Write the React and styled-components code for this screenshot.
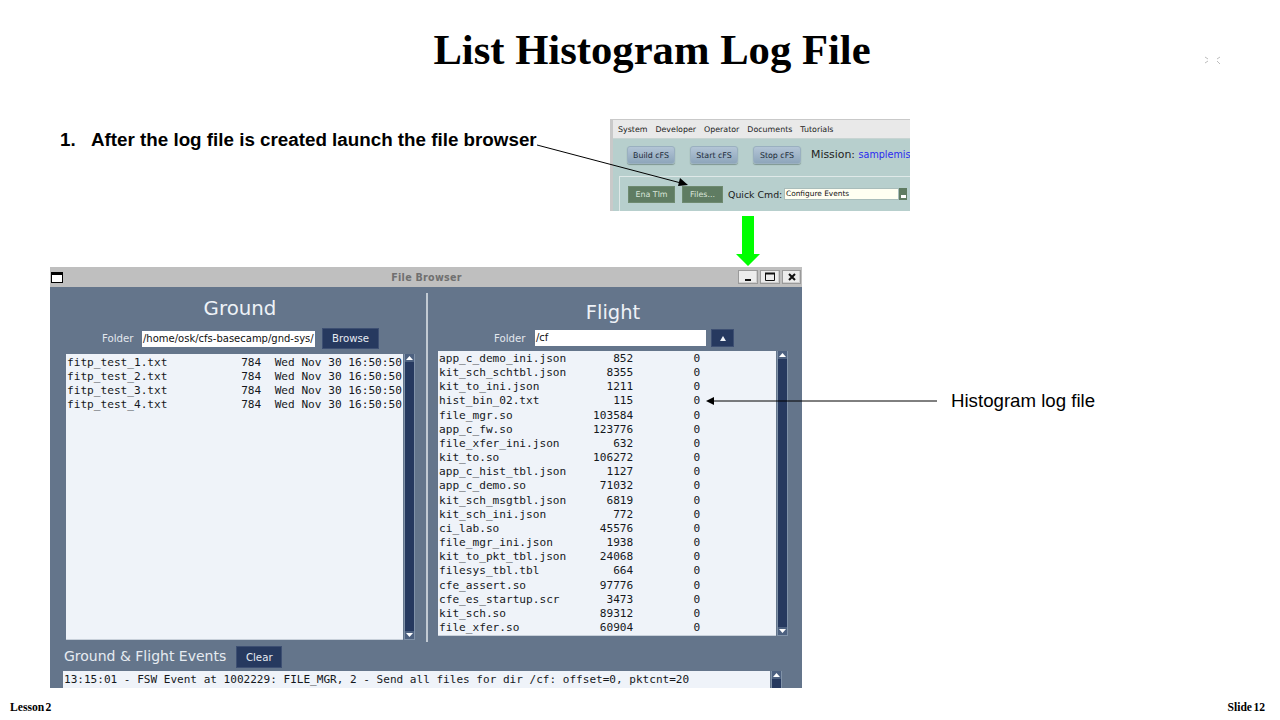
import React from "react";
import styled, { createGlobalStyle } from "styled-components";

const Global = createGlobalStyle`
  html, body { margin: 0; padding: 0; background: #fff; }
  * { box-sizing: border-box; }
`;
const Slide = styled.div`
  position: relative; width: 1280px; height: 720px; overflow: hidden; background: #fff;
  display: flex; flex-direction: column; font-family: "Liberation Sans", Arial, sans-serif; color: #000;
`;
const Title = styled.h1`
  margin: 0; height: 100px; padding-left: 24px; display: flex; align-items: center; justify-content: center;
  font: bold 42.67px/1 "Liberation Serif", "Times New Roman", serif;
`;
const TopRow = styled.div`
  display: flex; align-items: flex-start; height: 112px; padding: 19px 0 0 60px;
`;
const Step = styled.div`
  display: flex; width: 550px; padding-top: 10px; font-weight: bold; font-size: 18.8px; line-height: 21px; white-space: nowrap;
`;
const StepNum = styled.span` width: 31px; `;
const Shot = styled.div`
  width: 300px; height: 92px; overflow: hidden; background: #b7cfcd; font-family: "DejaVu Sans", sans-serif;
  border-left: 3px solid #c9c9c9; border-top: 1px solid #c9c9c9;
`;
const MenuBar = styled.div`
  height: 19px; background: #e9e9e9; display: flex; align-items: center; gap: 8px; padding-left: 5px;
  font-size: 7.9px; color: #222; border-bottom: 1px solid #c8d4d2;
`;
const ShotRow = styled.div`
  height: 37px; display: flex; align-items: flex-start; padding: 7px 0 0 14px; white-space: nowrap;
`;
const CfsButton = styled.div`
  width: 48px; height: 18px; flex: none; margin-right: 15px; border-radius: 3px; background: linear-gradient(#b3c5d6, #8ea6bb);
  border: 1px solid #9ab0c0; color: #1c2a38; font-size: 7.9px; display: flex; align-items: center; justify-content: center;
  box-shadow: 0 1px 1px #7f9693;
`;
const Mission = styled.span` font-size: 10.9px; line-height: 18px; color: #222; margin-left: -5px; `;
const MissionName = styled.span` font-size: 9.6px; color: #2a2af0; `;
const CmdPanel = styled.div`
  margin-left: 6px; height: 36px; border-top: 1px solid #dfe9e8; border-left: 1px solid #dfe9e8;
  display: flex; align-items: flex-start; padding: 9px 0 0 8px;
`;
const GreenButton = styled.div`
  width: ${p => p.$w}px; height: 17px; flex: none; margin-right: ${p => p.$mr}px; background: #5f7c62; border: 1px solid #6e8a70;
  color: #dbe6da; font-size: 7.9px; display: flex; align-items: center; justify-content: center;
`;
const QuickLabel = styled.span` font-size: 9.4px; line-height: 17px; color: #1a1a1a; width: 56px; flex: none; white-space: nowrap; `;
const QuickSelect = styled.div`
  width: 115px; height: 12px; flex: none; margin-top: 2px; background: #fffff2; border: 1px solid #a9bdbb; font-size: 7.4px; line-height: 10px; padding-left: 1px; color: #111; white-space: nowrap;
`;
const QuickDrop = styled.div`
  width: 8px; height: 12px; flex: none; margin-top: 2px; background: #5f7c62; display: flex; align-items: flex-end; justify-content: center; padding-bottom: 2px;
`;
const ArrowSlot = styled.div` height: 55px; padding: 4px 0 0 736px; display: flex; `;
const Win = styled.div`
  width: 752px; height: 421px; margin-left: 50px; background: #64758b; overflow: hidden; display: flex; flex-direction: column;
  font-family: "DejaVu Sans", sans-serif; color: #eef2f7;
`;
const TitleBar = styled.div`
  height: 20px; flex: none; background: #bfbfbf; display: flex; align-items: center; padding: 0 1px;
`;
const WinIcon = styled.div` width: 12px; height: 11px; background: #fff; border: 1px solid #000; border-top-width: 3px; `;
const WinTitle = styled.div`
  flex: 1; text-align: center; font-size: 9.6px; font-weight: bold; color: #707070; letter-spacing: .25px; margin-left: 52px;
`;
const WinButtons = styled.div` display: flex; gap: 2px; `;
const WinBtn = styled.div`
  width: ${p => p.$w}px; height: 14px; background: #ececec; border: 1px solid #9a9a9a; display: flex; align-items: center; justify-content: center;
  box-shadow: inset -1px -1px 0 #cfcfcf;
`;
const Panels = styled.div` display: flex; height: 355px; flex: none; `;
const Panel = styled.div`
  width: ${p => p.$w}px; flex: none; display: flex; flex-direction: column; padding: ${p => p.$pad};
`;
const Divider = styled.div` width: 2px; flex: none; margin-top: 6px; background: #c2cad3; `;
const PanelTitle = styled.div`
  height: 24px; line-height: 24px; text-align: center; font-size: ${p => p.$size}px; margin: ${p => p.$m};
`;
const FolderRow = styled.div`
  display: flex; align-items: center; height: ${p => p.$h}px; padding-left: ${p => p.$pl}px;
`;
const FolderLabel = styled.span` font-size: 10.2px; width: ${p => p.$w}px; color: #e3e8ee; `;
const FolderInput = styled.div`
  width: ${p => p.$w}px; height: 16px; background: #fff; color: #111; font-size: 10px; line-height: 16px; padding-left: 1px; white-space: nowrap; overflow: hidden;
`;
const NavyButton = styled.div`
  width: ${p => p.$w}px; height: ${p => p.$h}px; margin-left: ${p => p.$ml}px; background: #26395f; border: 1px solid #3d4f72; color: #e6ebf2;
  font-size: 10.2px; display: flex; align-items: center; justify-content: center; flex: none;
`;
const ListWrap = styled.div` display: flex; height: ${p => p.$h}px; margin-top: ${p => p.$mt}px; gap: 1px; `;
const ListBox = styled.pre`
  margin: 0; width: ${p => p.$w}px; background: #eff3f9; color: #15181c; border-bottom: 1px solid #c8d0da;
  font: 11.13px/14.16px "DejaVu Sans Mono", monospace; padding: ${p => p.$pt}px 0 0 ${p => p.$pl}px; overflow: hidden;
`;
const Bar = styled.div` width: 11px; flex: none; display: flex; flex-direction: column; background: #26395f; border: 1px solid #8092a8; border-width: 0 1px 1px 1px; `;
const BarEnd = styled.div`
  height: 8px; flex: none; background: #4d6180; display: flex; align-items: center; justify-content: center;
`;
const BarFill = styled.div` flex: 1; `;
const EventsRow = styled.div`
  display: flex; align-items: center; height: 22px; margin-top: 4px; padding-left: 14px; flex: none;
`;
const EventsLabel = styled.span` font-size: 14px; color: #e6ebf1; margin-bottom: 2px; `;
const LogWrap = styled.div` display: flex; gap: 1px; margin: 3px 0 0 13px; height: 40px; flex: none; `;
const LogBox = styled.pre`
  margin: 0; width: 707px; background: #eff3f9; color: #15181c; font: 11.05px/16px "DejaVu Sans Mono", monospace; padding: 1px 0 0 1px; overflow: hidden;
`;
const Footer = styled.div`
  margin-top: auto; height: 32px; padding: 13px 15px 0 10px; display: flex; justify-content: space-between;
  font: bold 11.6px/14px "Liberation Serif", serif; word-spacing: -1.5px;
`;
const Annotation = styled.div`
  position: absolute; left: 951px; top: 390px; font-size: 18.67px; line-height: 22px; white-space: nowrap;
`;
const Overlay = styled.svg` position: absolute; left: 0; top: 0; pointer-events: none; `;

const ground = ["fitp_test_1.txt", "fitp_test_2.txt", "fitp_test_3.txt", "fitp_test_4.txt"]
  .map(n => n.padEnd(26) + "784  Wed Nov 30 16:50:50").join("\n");
const flightRows = [
  ["app_c_demo_ini.json", 852], ["kit_sch_schtbl.json", 8355], ["kit_to_ini.json", 1211], ["hist_bin_02.txt", 115],
  ["file_mgr.so", 103584], ["app_c_fw.so", 123776], ["file_xfer_ini.json", 632], ["kit_to.so", 106272],
  ["app_c_hist_tbl.json", 1127], ["app_c_demo.so", 71032], ["kit_sch_msgtbl.json", 6819], ["kit_sch_ini.json", 772],
  ["ci_lab.so", 45576], ["file_mgr_ini.json", 1938], ["kit_to_pkt_tbl.json", 24068], ["filesys_tbl.tbl", 664],
  ["cfe_assert.so", 97776], ["cfe_es_startup.scr", 3473], ["kit_sch.so", 89312], ["file_xfer.so", 60904],
];
const flight = flightRows.map(([n, s]) => n.padEnd(19) + String(s).padStart(10) + "0".padStart(10)).join("\n");

const Scroll = () => (
  <Bar>
    <BarEnd><svg width="7" height="4"><path d="M3.5 0L7 4H0z" fill="#fff" /></svg></BarEnd>
    <BarFill />
    <BarEnd><svg width="7" height="4"><path d="M0 0h7L3.5 4z" fill="#fff" /></svg></BarEnd>
  </Bar>
);

export default function App() {
  return (
    <Slide>
      <Global />
      <Title>List Histogram Log File</Title>
      <TopRow>
        <Step><StepNum>1.</StepNum><span>After the log file is created launch the file browser</span></Step>
        <Shot>
          <MenuBar>
            <span>System</span><span>Developer</span><span>Operator</span><span>Documents</span><span>Tutorials</span>
          </MenuBar>
          <ShotRow>
            <CfsButton>Build cFS</CfsButton>
            <CfsButton>Start cFS</CfsButton>
            <CfsButton>Stop cFS</CfsButton>
            <Mission>Mission: <MissionName>samplemis</MissionName></Mission>
          </ShotRow>
          <CmdPanel>
            <GreenButton $w={47} $mr={7}>Ena Tlm</GreenButton>
            <GreenButton $w={41} $mr={5}>Files...</GreenButton>
            <QuickLabel>Quick Cmd:</QuickLabel>
            <QuickSelect>Configure Events</QuickSelect>
            <QuickDrop><svg width="5" height="3"><path d="M0 0h5v3H0z" fill="#fff" /></svg></QuickDrop>
          </CmdPanel>
        </Shot>
      </TopRow>
      <ArrowSlot>
        <svg width="24" height="50" viewBox="0 0 24 50"><path d="M6 0h12v38h6L12 50 0 38h6z" fill="#00ff00" /></svg>
      </ArrowSlot>
      <Win>
        <TitleBar>
          <WinIcon />
          <WinTitle>File Browser</WinTitle>
          <WinButtons>
            <WinBtn $w={20}><svg width="10" height="10"><path d="M2 8h6" stroke="#111" strokeWidth="2" /></svg></WinBtn>
            <WinBtn $w={20}><svg width="12" height="10"><path d="M1.5 1.5h9v7h-9z" fill="none" stroke="#111" /><path d="M1 1.5h10" stroke="#111" strokeWidth="2" /></svg></WinBtn>
            <WinBtn $w={19}><svg width="10" height="10"><path d="M2 2l6 6M8 2l-6 6" stroke="#111" strokeWidth="2" /></svg></WinBtn>
          </WinButtons>
        </TitleBar>
        <Panels>
          <Panel $w={376} $pad="10px 0 0 16px">
            <PanelTitle $size={19.8} $m="0 12px 7px 0">Ground</PanelTitle>
            <FolderRow $h={21} $pl={36}>
              <FolderLabel $w={40}>Folder</FolderLabel>
              <FolderInput $w={173}>/home/osk/cfs-basecamp/gnd-sys/</FolderInput>
              <NavyButton $w={57} $h={21} $ml={7}>Browse</NavyButton>
            </FolderRow>
            <ListWrap $h={286} $mt={5}>
              <ListBox $w={337} $pt={2} $pl={1}>{ground}</ListBox>
              <Scroll />
            </ListWrap>
          </Panel>
          <Divider />
          <Panel $w={374} $pad="14px 0 0 10px">
            <PanelTitle $size={19.5} $m="0 14px 4px 0">Flight</PanelTitle>
            <FolderRow $h={18} $pl={56}>
              <FolderLabel $w={41}>Folder</FolderLabel>
              <FolderInput $w={171}>/cf</FolderInput>
              <NavyButton $w={23} $h={18} $ml={5}>
                <svg width="6" height="5"><path d="M3 0l3 5H0z" fill="#eef2f7" /></svg>
              </NavyButton>
            </FolderRow>
            <ListWrap $h={285} $mt={4}>
              <ListBox $w={338} $pt={1} $pl={1}>{flight}</ListBox>
              <Scroll />
            </ListWrap>
          </Panel>
        </Panels>
        <EventsRow>
          <EventsLabel>Ground &amp; Flight Events</EventsLabel>
          <NavyButton $w={46} $h={22} $ml={10}>Clear</NavyButton>
        </EventsRow>
        <LogWrap>
          <LogBox>13:15:01 - FSW Event at 1002229: FILE_MGR, 2 - Send all files for dir /cf: offset=0, pktcnt=20</LogBox>
          <Scroll />
        </LogWrap>
      </Win>
      <Footer><span>Lesson 2</span><span>Slide 12</span></Footer>
      <Annotation>Histogram log file</Annotation>
      <Overlay width="1280" height="720" viewBox="0 0 1280 720">
        <path d="M537 145L681 183" stroke="#000" strokeWidth="1" />
        <path d="M688 185L680 178L678 186z" fill="#000" />
        <path d="M937 401H713" stroke="#000" strokeWidth="1" />
        <path d="M706 401L714 397V405z" fill="#000" />
        <g stroke="#bdbdbd" strokeWidth="1" fill="none">
          <path d="M1205 57l3 2M1205 63l3-2M1220 57l-3 2M1217 61l3 3" />
        </g>
      </Overlay>
    </Slide>
  );
}
